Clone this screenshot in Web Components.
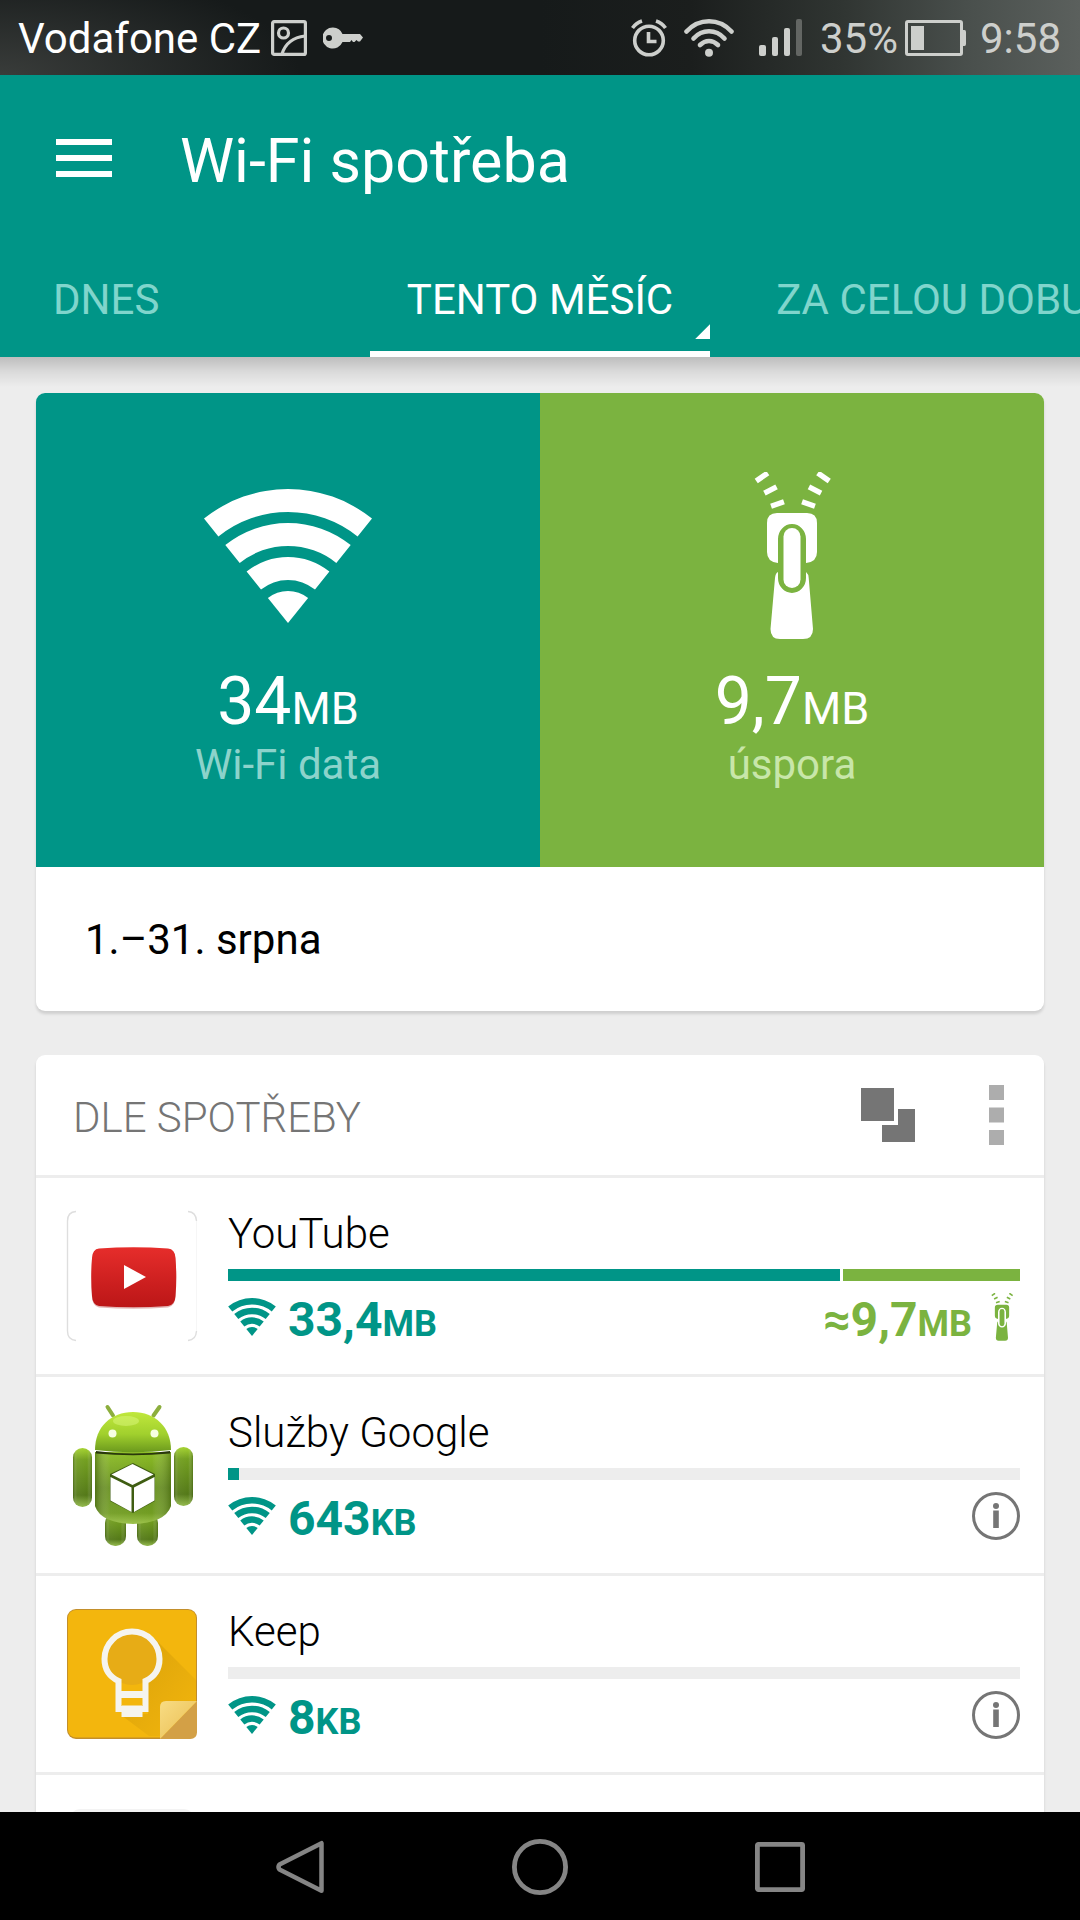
<!DOCTYPE html>
<html lang="cs">
<head>
<meta charset="utf-8">
<meta name="viewport" content="width=device-width, initial-scale=1">
<title>Wi-Fi spotřeba</title>
<style>
  html, body { margin: 0; height: 100%; }
  body {
    --teal: #009587;
    --green: #7bb340;
    --line: #ededed;
    --grey: #757575;
    font-family: Roboto, "Noto Sans", sans-serif;
    font-size: 42px;
    line-height: 48px;
    background: #ededed;
    color: #000;
  }
</style>
</head>
<body>
<data-app></data-app>

<script>
const ICONS = {
  wifi: ['0 0 168 134', '<g fill="currentColor"><path d="M0 29.6A134 134 0 0 1 168 29.6L153.6 47.5A111 111 0 0 0 14.4 47.5Z"/><path d="M21.3 56.1A100 100 0 0 1 146.7 56.1L132.3 74A77 77 0 0 0 35.7 74Z"/><path d="M42.6 82.6A66 66 0 0 1 125.4 82.6L111 100.5A43 43 0 0 0 57 100.5Z"/><path d="M63.9 109.1A32 32 0 0 1 104.1 109.1L84 134Z"/></g>'],
  zip: ['0 0 126 168', '<g fill="currentColor"><path d="M48 41H78Q88 41 88 51V80Q88 90 77 91V67A14 15 0 0 0 49 67V91Q38 90 38 80V51Q38 41 48 41Z"/><rect x="54.500" y="56" width="17" height="60" rx="8.500"/><path d="M49 100V106A14 15 0 0 0 77 106V100Q79.500 102 79.700 106L84 157Q84 167 74 167H51Q41.500 167 41.500 157L46 106Q46.500 101 49 100Z"/><g transform="translate(33 5)"><rect x="-7" y="-2.700" width="14" height="5.400" transform="rotate(-35)"/></g><g transform="translate(41.500 18)"><rect x="-6.800" y="-2.700" width="13.600" height="5.400" transform="rotate(-27)"/></g><g transform="translate(48.500 32)"><rect x="-6.800" y="-2.700" width="13.600" height="5.400" transform="rotate(-19)"/></g><g transform="translate(94.500 5)"><rect x="-7" y="-2.700" width="14" height="5.400" transform="rotate(35)"/></g><g transform="translate(86 18)"><rect x="-6.800" y="-2.700" width="13.600" height="5.400" transform="rotate(27)"/></g><g transform="translate(79.500 32)"><rect x="-6.800" y="-2.700" width="13.600" height="5.400" transform="rotate(19)"/></g></g>'],
  menu: ['0 0 56 38', '<path fill="currentColor" d="M0 0H56V6H0ZM0 16H56V22H0ZM0 32H56V38H0Z"/>'],
  picture: ['0 0 36 36', '<g fill="none" stroke="currentColor" stroke-width="3.200"><rect x="1.600" y="1.600" width="32.800" height="32.800" rx="1.500"/><circle cx="12.500" cy="13" r="5"/><path d="M11 34Q16 18 34 16"/></g>'],
  key: ['0 0 40 22', '<path fill="currentColor" fill-rule="evenodd" d="M10 .5A10.500 10.500 0 0 1 19.500 7H37L40 10.500L37 14.500H35L33.500 13L31.500 15H30L28.500 13L27 15H19.500A10.500 10.500 0 1 1 10 .5ZM6 8A3 3 0 1 0 6 14A3 3 0 1 0 6 8Z"/>'],
  alarm: ['0 0 36 38', '<g fill="none" stroke="currentColor" stroke-width="3.600"><circle cx="18" cy="21.500" r="14.300"/><path d="M17.500 13V22.500H25.500"/><path d="M1.500 9Q5 4 11 2M34.500 9Q31 4 25 2"/></g>'],
  signalwifi: ['0 0 50 38', '<g fill="none" stroke="currentColor" stroke-width="4.600" stroke-linecap="round"><path d="M2.500 12.500Q12 2.300 25 2.300T47.500 12.500"/><path d="M9.500 19.500Q16 12.300 25 12.300T40.500 19.500"/><path d="M16 26Q20 22 25 22T34 26"/></g><circle cx="25" cy="33.700" r="4" fill="currentColor"/>'],
  bars: ['0 0 44 37', '<g fill="currentColor"><rect x="0" y="26" width="7" height="11" rx="2"/><rect x="13" y="18" width="6" height="19" rx="2"/><rect x="25" y="9" width="6" height="28" rx="2"/><rect x="37" y="0" width="6" height="37" rx="2" opacity=".35"/></g>'],
  battery: ['0 0 61 36', '<rect x="1.500" y="1.500" width="55" height="33" rx="1.500" fill="none" stroke="currentColor" stroke-width="3"/><path fill="currentColor" d="M6 6H19V30H6ZM57 10H59.500Q61 10 61 12V24Q61 26 59.500 26H57Z"/>'],
  layers: ['0 0 54 54', '<path fill="currentColor" d="M0 0H33V33H0ZM37 21H54V54H21V37H37Z"/>'],
  more: ['0 0 15 60', '<path fill="currentColor" d="M0 0H15V15H0ZM0 22.500H15V37.500H0ZM0 45H15V60H0Z"/>'],
  info: ['0 0 48 48', '<circle cx="24" cy="24" r="22.500" fill="none" stroke="currentColor" stroke-width="3"/><circle cx="24" cy="14" r="3" fill="currentColor"/><rect x="21.200" y="18.500" width="5.600" height="17.500" fill="currentColor"/>'],
  back: ['0 0 48 54', '<path d="M45.500 3.200V50.800L3.500 29.500Q1.500 27 3.500 24.500Z" fill="none" stroke="currentColor" stroke-width="4.500" stroke-linejoin="round"/>'],
  home: ['0 0 56 56', '<circle cx="28" cy="28" r="25.600" fill="none" stroke="currentColor" stroke-width="4.800"/>'],
  recent: ['0 0 50 50', '<rect x="2.400" y="2.400" width="45.200" height="45.200" rx="1" fill="none" stroke="currentColor" stroke-width="4.800"/>'],
  youtube: ['0 0 144 144', '<defs><linearGradient id="r" x2="0" y2="1"><stop stop-color="#e62d2b"/><stop offset="1" stop-color="#bb1617"/></linearGradient></defs><rect x="7.500" y="7.500" width="129" height="129" rx="10" fill="#fff"/><g fill="none" stroke="#dedede"><path d="M16 7.500Q7.500 8 7.500 17V127Q7.500 136 16 136.500" stroke-width="1.400"/><path d="M128 7.500Q136 8 136.500 17M136.500 127Q136 136 128 136.500" stroke-width="1.400"/><path d="M136.500 17V127" stroke="#f6f6f6"/></g><path d="M39 45.500Q73.500 43 108 45.500Q115 46 115.500 55Q117 74 115.500 93Q115 102 108 103.500Q73.500 106 39 103.500Q32.500 102 32 93Q30.500 74 32 55Q32.500 46 39 45.500Z" fill="#a31515" opacity=".3"/><path d="M39 44.500Q73.500 42 108 44.500Q115 45 115.500 54Q117 73 115.500 92Q115 101 108 102Q73.500 104.500 39 102Q32.500 101 32 92Q30.500 73 32 54Q32.500 45 39 44.500Z" fill="url(#r)"/><path d="M64 61L86 73L64 85Z" fill="#fff"/>'],
  android: ['0 0 144 144', '<defs><linearGradient id="h" x2="0" y2="1"><stop stop-color="#c0e83c"/><stop offset=".55" stop-color="#a1d02d"/><stop offset="1" stop-color="#6b991d"/></linearGradient><linearGradient id="b" x2="0" y2="1"><stop stop-color="#8dbd26"/><stop offset=".5" stop-color="#668f1d"/><stop offset=".85" stop-color="#729d23"/><stop offset="1" stop-color="#9cc24a"/></linearGradient><linearGradient id="a" x2="0" y2="1"><stop stop-color="#a5d330"/><stop offset=".2" stop-color="#739f20"/><stop offset=".8" stop-color="#547918"/><stop offset="1" stop-color="#93b94c"/></linearGradient><linearGradient id="s" x2="1" y2="0"><stop stop-color="#314b08" stop-opacity=".45"/><stop offset=".2" stop-color="#fff" stop-opacity=".05"/><stop offset=".75" stop-color="#fff" stop-opacity="0"/><stop offset="1" stop-color="#314b08" stop-opacity=".4"/></linearGradient></defs><path d="M47.500 4L53 12.500M99.500 4L93.500 12.500" stroke="#8cae3d" stroke-width="4" stroke-linecap="round"/><g fill="url(#a)"><rect x="45" y="110" width="21" height="33" rx="10"/><rect x="77" y="110" width="21" height="33" rx="10"/><rect x="13" y="45" width="19" height="59" rx="9.500"/><rect x="114" y="44" width="19" height="59" rx="9.500"/></g><g fill="url(#s)"><rect x="45" y="110" width="21" height="33" rx="10"/><rect x="77" y="110" width="21" height="33" rx="10"/><rect x="13" y="45" width="19" height="59" rx="9.500"/><rect x="114" y="44" width="19" height="59" rx="9.500"/></g><path d="M35 49H111V103Q105 120 73 121Q41 120 35 103Z" fill="url(#b)"/><path d="M35 49H111V103Q105 120 73 121Q41 120 35 103Z" fill="url(#s)"/><path d="M36 48Q73 53 110 48V50.500Q73 54 36 50.500Z" fill="#29380b"/><path d="M35 47C35 24 51 9 73 9S111 24 111 47Q73 51.500 35 47Z" fill="url(#h)"/><ellipse cx="66" cy="18" rx="13" ry="5" fill="#e5ff91" opacity=".4"/><circle cx="52.500" cy="30.500" r="4" fill="#f7ffe2"/><circle cx="94.500" cy="30.500" r="4" fill="#f7ffe2"/><path d="M73 60L95 71V98L73 110L50 98V71Z" fill="#3f5d12"/><path d="M72.500 61L93.500 71.500L72.500 82L51.500 71.500ZM50.500 74L71.500 84.500V109L50.500 97.500ZM94.500 74L74 84.500V109L94.500 97.500Z" fill="#fff"/>'],
  keep: ['0 0 144 144', '<defs><linearGradient id="f" x2="1" y2="1"><stop stop-color="#f8dc83"/><stop offset="1" stop-color="#e9bd51"/></linearGradient><linearGradient id="w" x2="1" y2="1"><stop stop-color="#8a6000" stop-opacity=".25"/><stop offset="1" stop-color="#8a6000" stop-opacity="0"/></linearGradient></defs><rect x="7" y="7" width="130" height="130" rx="9" fill="#c38f2b"/><rect x="8" y="8" width="128" height="127.500" rx="8" fill="#f3b60d"/><path d="M94 36L137 79V99L101 134H89L61 113L88 112V82L103 62Z" fill="url(#w)"/><circle cx="72" cy="57" r="26" fill="#e7ac16"/><path d="M58.500 93V79C48 74 44.500 65 44.500 57A27.500 27.500 0 0 1 99.500 57C99.500 65 96 74 85.500 79V93H58.500V107H64.500V112H79.500V107H85.500V93" fill="none" stroke="#f5f4ef" stroke-width="6"/><path d="M60 92H84M62 106.500H82M66 111H78" stroke="#f5f4ef" stroke-width="6"/><path d="M100 137L137 99V130Q137 137 130 137Z" fill="#d3a046"/><path d="M100 137V105Q100 99 106 99H137Z" fill="url(#f)"/>'],
  blank: ['0 0 144 144', '<rect x="10" y="8" width="124" height="129" rx="10" fill="#f3f3f3"/>']
};

/* Registers an element whose shadow root is cloned from a template. */
function define(name, html, setup) {
  const template = document.createElement('template');
  template.innerHTML = html;
  customElements.define(name, class extends HTMLElement {
    constructor() {
      super();
      this.attachShadow({ mode: 'open' }).append(template.content.cloneNode(true));
    }
    connectedCallback() { if (setup) setup(this, this.shadowRoot); }
  });
}

define('ui-icon', `
  <style>:host { display: block; flex: none; } svg { display: block; width: 100%; height: 100%; }</style>
  <svg aria-hidden="true"></svg>`, (el, root) => {
  const [box, shapes] = ICONS[el.getAttribute('name')];
  const svg = root.querySelector('svg');
  svg.setAttribute('viewBox', box);
  svg.innerHTML = shapes;
});

define('status-bar', `
  <style>
    :host {
      display: flex; align-items: center; justify-content: space-between; height: 75px; padding: 0 19px 0 18px; box-sizing: border-box;
      background: radial-gradient(ellipse 300px 110px at 0 100%, #393c3a, transparent), linear-gradient(90deg, #161a1a 50%, #1b1e1d 64%, #303532 78%, #4a504d 90%, #5b605d);
      color: #fff;
    }
    div { display: flex; align-items: center; color: #cdcfcc; }
    b, span { font-weight: 400; padding-top: 3px; }
    b { color: #fff; margin-right: 10px; }
    .picture { width: 36px; height: 36px; margin-right: 16px; }
    .key { width: 40px; height: 22px; }
    .alarm { width: 36px; height: 38px; margin-right: 17px; }
    .wifi { width: 50px; height: 38px; margin-right: 25px; }
    .bars { width: 44px; height: 37px; margin-right: 17px; }
    .battery { width: 61px; height: 36px; margin: 0 14px 0 7px; }
  </style>
  <div><b>Vodafone CZ</b><ui-icon class="picture" name="picture"></ui-icon><ui-icon class="key" name="key"></ui-icon></div>
  <div>
    <ui-icon class="alarm" name="alarm"></ui-icon><ui-icon class="wifi" name="signalwifi"></ui-icon><ui-icon class="bars" name="bars"></ui-icon>
    <span>35%</span><ui-icon class="battery" name="battery"></ui-icon><span>9:58</span>
  </div>`);

define('app-bar', `
  <style>
    :host { display: block; background: var(--teal); color: #fff; position: relative; z-index: 1; }
    :host::after { content: ""; position: absolute; inset: 100% 0 auto; height: 30px; background: linear-gradient(rgba(0,0,0,.2), rgba(0,0,0,.08) 50%, transparent); }
    header { display: flex; align-items: center; height: 168px; padding: 0 56px; gap: 68px; box-sizing: border-box; }
    button { border: 0; padding: 0 0 2px; background: none; color: inherit; }
    ui-icon { width: 56px; height: 38px; }
    h1 { margin: 0; padding-top: 3px; font-size: 61px; line-height: 72px; font-weight: 400; }
  </style>
  <header><button aria-label="Menu"><ui-icon name="menu"></ui-icon></button><h1><slot name="title"></slot></h1></header>
  <slot></slot>`);

define('period-tabs', `
  <style>
    :host { display: grid; grid-template-columns: minmax(0, 1fr) auto minmax(0, 1fr); height: 114px; overflow: hidden; }
    button {
      position: relative; border: 0; border-bottom: 6px solid transparent; padding: 6px 37px 0; background: none;
      font: inherit; color: #80d5cc; white-space: nowrap; text-align: left;
    }
    button:first-of-type { padding-left: 53px; }
    button:last-of-type { padding-left: 66px; }
    [aria-selected=true] { color: #fff; border-color: #fff; }
    i { position: absolute; right: 0; bottom: 12px; width: 15px; height: 15px; background: #fff; clip-path: polygon(100% 0, 100% 100%, 0 100%); }
  </style>
  <button role="tab">DNES</button><button role="tab" aria-selected="true">TENTO MĚSÍC<i></i></button><button role="tab">ZA CELOU DOBU</button>`);

define('data-card', `
  <style>
    :host { display: block; background: #fff; border-radius: 9px; overflow: hidden; box-shadow: 0 3px 3px rgba(0,0,0,.13); flex: none; }
  </style><slot></slot>`);

define('total-tile', `
  <style>
    :host { display: flex; flex-direction: column; align-items: center; flex: 1; height: 474px; padding-top: 79px; box-sizing: border-box; color: #fff; }
    figure { margin: 0 0 26px; height: 168px; display: flex; align-items: center; }
    .wifi { width: 168px; height: 134px; }
    .zip { width: 126px; height: 168px; }
    .value { font-size: 66px; line-height: 72px; }
    .value small { font-size: 45px; line-height: 0; }
    .label { margin-top: 3px; color: var(--label); }
  </style>
  <figure></figure>
  <div class="value"><slot></slot><small></small></div>
  <div class="label"><slot name="label"></slot></div>`, (el, root) => {
  const icon = el.getAttribute('icon');
  root.querySelector('figure').innerHTML = `<ui-icon class="${icon}" name="${icon}"></ui-icon>`;
  root.querySelector('small').textContent = el.getAttribute('unit');
});

define('list-header', `
  <style>
    :host { display: flex; align-items: center; height: 120px; padding: 0 40px 0 37px; color: var(--grey); }
    h2 { margin: 0; padding-top: 5px; font: inherit; font-weight: 300; flex: 1; }
    button { border: 0; padding: 0; background: none; color: inherit; }
    .layers { width: 54px; height: 54px; }
    .more { width: 15px; height: 60px; margin-left: 74px; color: #adadad; }
  </style>
  <h2><slot></slot></h2>
  <button aria-label="Řazení"><ui-icon class="layers" name="layers"></ui-icon></button>
  <button aria-label="Další"><ui-icon class="more" name="more"></ui-icon></button>`);

define('app-row', `
  <style>
    :host { display: flex; gap: 24px; height: 196px; padding: 0 24px; border-top: 3px solid var(--line); }
    .app { width: 144px; height: 144px; padding-top: 26px; }
    section { flex: 1; min-width: 0; padding-top: 32px; }
    .name { font-weight: 300; }
    .bar { display: flex; gap: 3px; height: 12px; margin: 11px 0 12px; background: var(--line); }
    .bar i { background: var(--teal); }
    .bar i + i { background: var(--green); flex: 1; }
    .bar.split { background: none; }
    .stats { display: flex; align-items: center; height: 48px; color: var(--teal); font-size: 48px; font-weight: 700; }
    .stats span { padding-top: 6px; }
    small { font-size: 36px; line-height: 0; }
    .wifi { width: 48px; height: 38px; margin-right: 12px; }
    .saved { display: flex; align-items: center; margin-left: auto; color: var(--green); }
    .zip { width: 36px; height: 48px; margin-left: 12px; }
    button { border: 0; padding: 0; background: none; color: var(--grey); margin-left: auto; }
    .info { width: 48px; height: 48px; }
  </style>
  <div class="app"></div>
  <section>
    <div class="name"><slot></slot></div>
    <div class="bar"></div>
    <div class="stats"></div>
  </section>`, (el, root) => {
  const get = name => el.getAttribute(name);
  const bar = root.querySelector('.bar');
  const stats = root.querySelector('.stats');
  root.querySelector('.app').innerHTML = `<ui-icon name="${get('icon')}"></ui-icon>`;
  if (get('share')) bar.innerHTML = `<i style="width:${get('share')}%"></i>`;
  if (get('saved')) { bar.classList.add('split'); bar.innerHTML += '<i></i>'; }
  if (get('used')) {
    stats.innerHTML = `<ui-icon class="wifi" name="wifi"></ui-icon><span>${get('used')}<small>${get('unit')}</small></span>` +
      (get('saved')
        ? `<div class="saved"><span>≈${get('saved')}<small>MB</small></span><ui-icon class="zip" name="zip"></ui-icon></div>`
        : '<button aria-label="Informace"><ui-icon class="info" name="info"></ui-icon></button>');
  } else {
    bar.remove();
  }
});

define('nav-bar', `
  <style>
    :host { display: grid; grid-template-columns: repeat(3, 240px); justify-content: center; height: 108px; background: #000; color: #858585; flex: none; }
    button { border: 0; padding: 2px 0 0; background: none; color: inherit; display: grid; place-items: center; }
    .back { width: 48px; height: 54px; }
    .home { width: 56px; height: 56px; }
    .recent { width: 50px; height: 50px; }
  </style>
  <button aria-label="Zpět"><ui-icon class="back" name="back"></ui-icon></button>
  <button aria-label="Domů"><ui-icon class="home" name="home"></ui-icon></button>
  <button aria-label="Poslední"><ui-icon class="recent" name="recent"></ui-icon></button>`);

define('data-app', `
  <style>
    :host { display: flex; flex-direction: column; height: 100vh; overflow: hidden; }
    status-bar, app-bar { flex: none; }
    main { flex: 1; min-height: 0; overflow: hidden; display: flex; flex-direction: column; gap: 44px; padding: 36px 36px 0; }
    .totals { display: flex; }
    .data { background: var(--teal); --label: #8cd3cb; }
    .saving { background: var(--green); --label: #c8e6a9; }
    .period { padding: 49px 49px 47px; }
  </style>
  <status-bar></status-bar>
  <app-bar><span slot="title">Wi-Fi spotřeba</span><period-tabs role="tablist"></period-tabs></app-bar>
  <main>
    <data-card>
      <div class="totals">
        <total-tile class="data" icon="wifi" unit="MB">34<span slot="label">Wi-Fi data</span></total-tile>
        <total-tile class="saving" icon="zip" unit="MB">9,7<span slot="label">úspora</span></total-tile>
      </div>
      <div class="period">1.–31. srpna</div>
    </data-card>
    <data-card>
      <list-header>DLE SPOTŘEBY</list-header>
      <app-row icon="youtube" share="77.300" used="33,4" unit="MB" saved="9,7">YouTube</app-row>
      <app-row icon="android" share="1.400" used="643" unit="KB">Služby Google</app-row>
      <app-row icon="keep" used="8" unit="KB">Keep</app-row>
      <app-row icon="blank"></app-row>
    </data-card>
  </main>
  <nav-bar></nav-bar>`);
</script>
</body>
</html>
